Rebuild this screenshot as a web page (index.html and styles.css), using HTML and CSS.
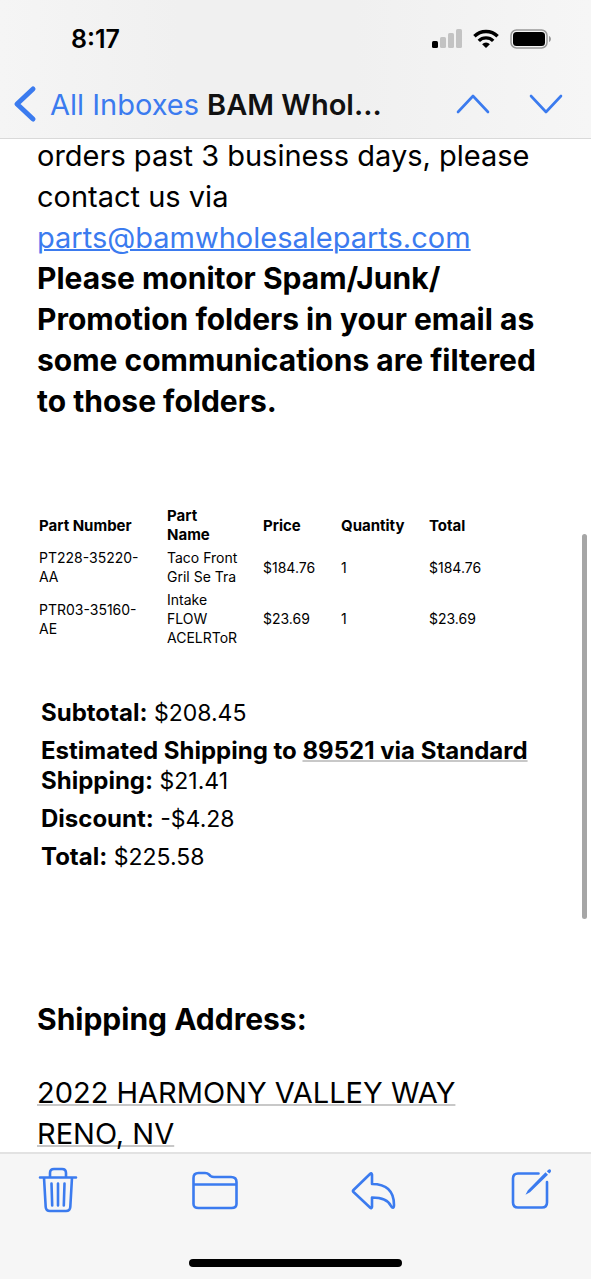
FILE: index.html
```html
<!DOCTYPE html>
<html lang="en">
<head>
<meta charset="utf-8">
<meta name="viewport" content="width=device-width, initial-scale=1">
<title>BAM Wholesale Parts</title>
<link rel="stylesheet" href="styles.css">
</head>
<body>
<div class="screen">
  <header class="top">
    <div class="status">
      <time class="clock">8:17</time>
      <div class="indicators">
        <svg width="30" height="20" viewBox="0 0 30 20" aria-hidden="true">
          <rect x="0" y="12" width="6" height="7" rx="1.5" fill="#000"/>
          <rect x="8" y="8" width="6" height="11" rx="1.5" fill="#c3c3c3"/>
          <rect x="16" y="4" width="6" height="15" rx="1.5" fill="#c3c3c3"/>
          <rect x="24" y="0" width="6" height="19" rx="1.5" fill="#c3c3c3"/>
        </svg>
        <svg width="26" height="20" viewBox="0 0 26 20" fill="none" stroke="#000" stroke-width="3.4" aria-hidden="true">
          <path d="M1.400 7.200a16.500 16.500 0 0 1 23.200 0"/>
          <path d="M5.800 11.900a10.200 10.200 0 0 1 14.400 0"/>
          <path d="M9.100 15.200a5.600 5.600 0 0 1 7.800 0L13 19z" fill="#000" stroke="none"/>
        </svg>
        <svg width="42" height="20" viewBox="0 0 42 20" aria-hidden="true">
          <rect x="1" y="1" width="36" height="18" rx="5.5" fill="none" stroke="#999" stroke-width="1.5"/>
          <rect x="3" y="3" width="32" height="14" rx="3.5" fill="#000"/>
          <path d="M39 7c2.600.8 2.600 5.200 0 6z" fill="#999"/>
        </svg>
      </div>
    </div>
    <nav class="nav">
      <button class="back" type="button">
        <svg width="22" height="36" viewBox="0 0 22 36" aria-hidden="true"><path class="thick" d="M19 3 3 18l16 15"/></svg>
        <span>All Inboxes</span>
      </button>
      <h1 class="title">BAM Whol...</h1>
      <div class="pager">
        <button type="button" aria-label="Previous message"><svg width="34" height="20" viewBox="0 0 34 20"><path d="M2 18 17 2l15 16"/></svg></button>
        <button type="button" aria-label="Next message"><svg width="34" height="20" viewBox="0 0 34 20"><path d="M2 2l15 16L32 2"/></svg></button>
      </div>
    </nav>
  </header>

  <main class="viewport">
    <article class="message">
      <p>orders past 3 business days, please contact us via <a class="mail" href="mailto:parts@bamwholesaleparts.com">parts@bamwholesaleparts.com</a></p>
      <p class="strong">Please monitor Spam/Junk/<wbr>Promotion folders in your email as some communications are filtered to those folders.</p>
      <table class="parts">
        <colgroup><col class="c-number"><col class="c-name"><col class="c-price"><col class="c-qty"><col></colgroup>
        <thead>
          <tr><th>Part Number</th><th>Part<br>Name</th><th>Price</th><th>Quantity</th><th>Total</th></tr>
        </thead>
        <tbody>
          <tr><td>PT228-35220-<br>AA</td><td>Taco Front<br>Gril Se Tra</td><td>$184.76</td><td>1</td><td>$184.76</td></tr>
          <tr><td>PTR03-35160-<br>AE</td><td>Intake<br>FLOW<br>ACELRToR</td><td>$23.69</td><td>1</td><td>$23.69</td></tr>
        </tbody>
      </table>
      <div class="summary">
        <p><b>Subtotal:</b> $208.45</p>
        <p><b>Estimated Shipping to <span class="detected">89521 via Standard</span><br>Shipping:</b> $21.41</p>
        <p><b>Discount:</b> -$4.28</p>
        <p><b>Total:</b> $225.58</p>
      </div>
      <h2 class="strong">Shipping Address:</h2>
      <p class="address"><span class="detected">2022 HARMONY VALLEY WAY<br>RENO, NV</span></p>
    </article>
    <div class="scrollbar"></div>
  </main>

  <footer class="bottom">
    <div class="tools">
      <button type="button" aria-label="Delete">
        <svg width="40" height="46" viewBox="0 0 40 46"><path d="M2 10.500h36M12 10V6q0-4 4-4h8q4 0 4 4v4M6 10.500l1.700 29.500q.3 4 4.300 4h16q4 0 4.300-4L34 10.500M13.500 16.500l.7 22M20 16.500v22M26.500 16.500l-.7 22"/></svg>
      </button>
      <button type="button" aria-label="Move to folder">
        <svg width="46" height="46" viewBox="0 0 46 46"><path d="M1.500 37V11q0-5 5-5h6.500q2.500 0 4 1.500l1.500 1.500q1.500 1 3.500 1H39q5.500 0 5.500 5v22q0 4-5 4H6.500q-5 0-5-4zM1.500 17.500h43"/></svg>
      </button>
      <button type="button" aria-label="Reply">
        <svg width="46" height="46" viewBox="0 0 46 46"><path d="M21 7.500v9.500c15 0 22 7 22 21 0 3.500-1.500 3.500-3 1-3-6.500-9-8.500-19-8.500v9.500q-.5 2-2 .5L2.500 25q-1-1 0-2L19 7q1.500-1.500 2 .5z"/></svg>
      </button>
      <button type="button" aria-label="Compose">
        <svg width="40" height="46" viewBox="0 0 40 46"><path d="M27.500 6.500H7q-5 0-5 5v24q0 5 5 5h24q5 0 5-5V15"/><path class="fill" d="M34.500 5.300 37 7.700 19 25.300l-4.500 2.500 2.400-4.600zM35.800 4.200q3-3.500 4.200-.8.500 1.600-1.700 3z"/></svg>
      </button>
    </div>
    <div class="home"></div>
  </footer>
</div>
</body>
</html>
```
FILE: styles.css
```css
* { box-sizing: border-box; }

body {
  margin: 0;
  background: #fff;
  color: #000;
  font-family: Inter, Roboto, sans-serif;
}

p, h1, h2 { margin: 0; }

button {
  display: flex;
  align-items: center;
  padding: 0;
  border: 0;
  background: none;
  color: #3b7bef;
  font: inherit;
  cursor: pointer;
}

button svg {
  display: block;
  fill: none;
  stroke: #3b7bef;
  stroke-width: 2.6;
  stroke-linecap: round;
  stroke-linejoin: round;
  overflow: visible;
}

button svg .thick { stroke-width: 5; }
button svg .fill { fill: #3b7bef; stroke: none; }

.screen {
  display: flex;
  flex-direction: column;
  height: 100vh;
  overflow: hidden;
}

.top {
  background: linear-gradient(90deg, #f5f5f5, #f0f0f0 30%, #f0f0f0 60%, #f6f6f6);
  border-bottom: 1px solid #d9d9d9;
}

.status {
  display: flex;
  justify-content: space-between;
  align-items: center;
  height: 78px;
  padding: 0 39px 0 71px;
}

.clock {
  font-size: 25px;
  font-weight: 600;
}

.indicators {
  display: flex;
  gap: 11px;
}

.nav {
  display: flex;
  align-items: center;
  height: 60px;
  padding: 0 28px 8px 14px;
}

.back {
  gap: 14px;
  font-size: 29px;
}

.title {
  margin-left: 8px;
  color: #111;
  font-size: 29px;
  font-weight: 600;
}

.pager {
  display: flex;
  gap: 39px;
  margin-left: auto;
}

.viewport {
  position: relative;
  flex: 1;
  min-height: 0;
}

.message {
  margin-top: -4px;
  padding: 0 36px 0 37px;
  font-size: 29px;
  line-height: 41px;
}

.mail {
  display: block;
  color: #3b7bef;
  text-decoration-thickness: 2px;
}

.strong {
  font-size: 30px;
  font-weight: 700;
}

.parts {
  width: 460px;
  max-width: 100%;
  margin-top: 81px;
  table-layout: fixed;
  border-spacing: 0 2px;
  font-size: 14px;
  line-height: 19px;
}

.parts th,
.parts td {
  padding: 1px 2px;
  text-align: left;
  vertical-align: middle;
}

.parts th { font-size: 15px; }

.c-number { width: 128px; }
.c-name { width: 96px; }
.c-price { width: 78px; }
.c-qty { width: 88px; }

.summary {
  display: flex;
  flex-direction: column;
  gap: 8px;
  margin: 48px 0 127px;
  padding-left: 4px;
  font-size: 23px;
  line-height: 30px;
}

.summary b { font-size: 24px; }

.detected {
  text-decoration: underline;
  text-decoration-color: #c8c8c8;
  text-decoration-thickness: 2px;
  text-decoration-skip-ink: none;
}

.address { margin-top: 32px; }

.scrollbar {
  position: absolute;
  top: 39%;
  right: 4px;
  width: 5px;
  height: 38%;
  border-radius: 3px;
  background: #a6a6a6;
}

.bottom {
  border-top: 2px solid #e2e2e2;
  background: #f6f6f6;
}

.tools {
  display: flex;
  justify-content: space-between;
  padding: 13px 40px 0 38px;
}

.home {
  width: 36%;
  height: 8px;
  margin: 46px auto 12px;
  border-radius: 4px;
  background: #000;
}
```
